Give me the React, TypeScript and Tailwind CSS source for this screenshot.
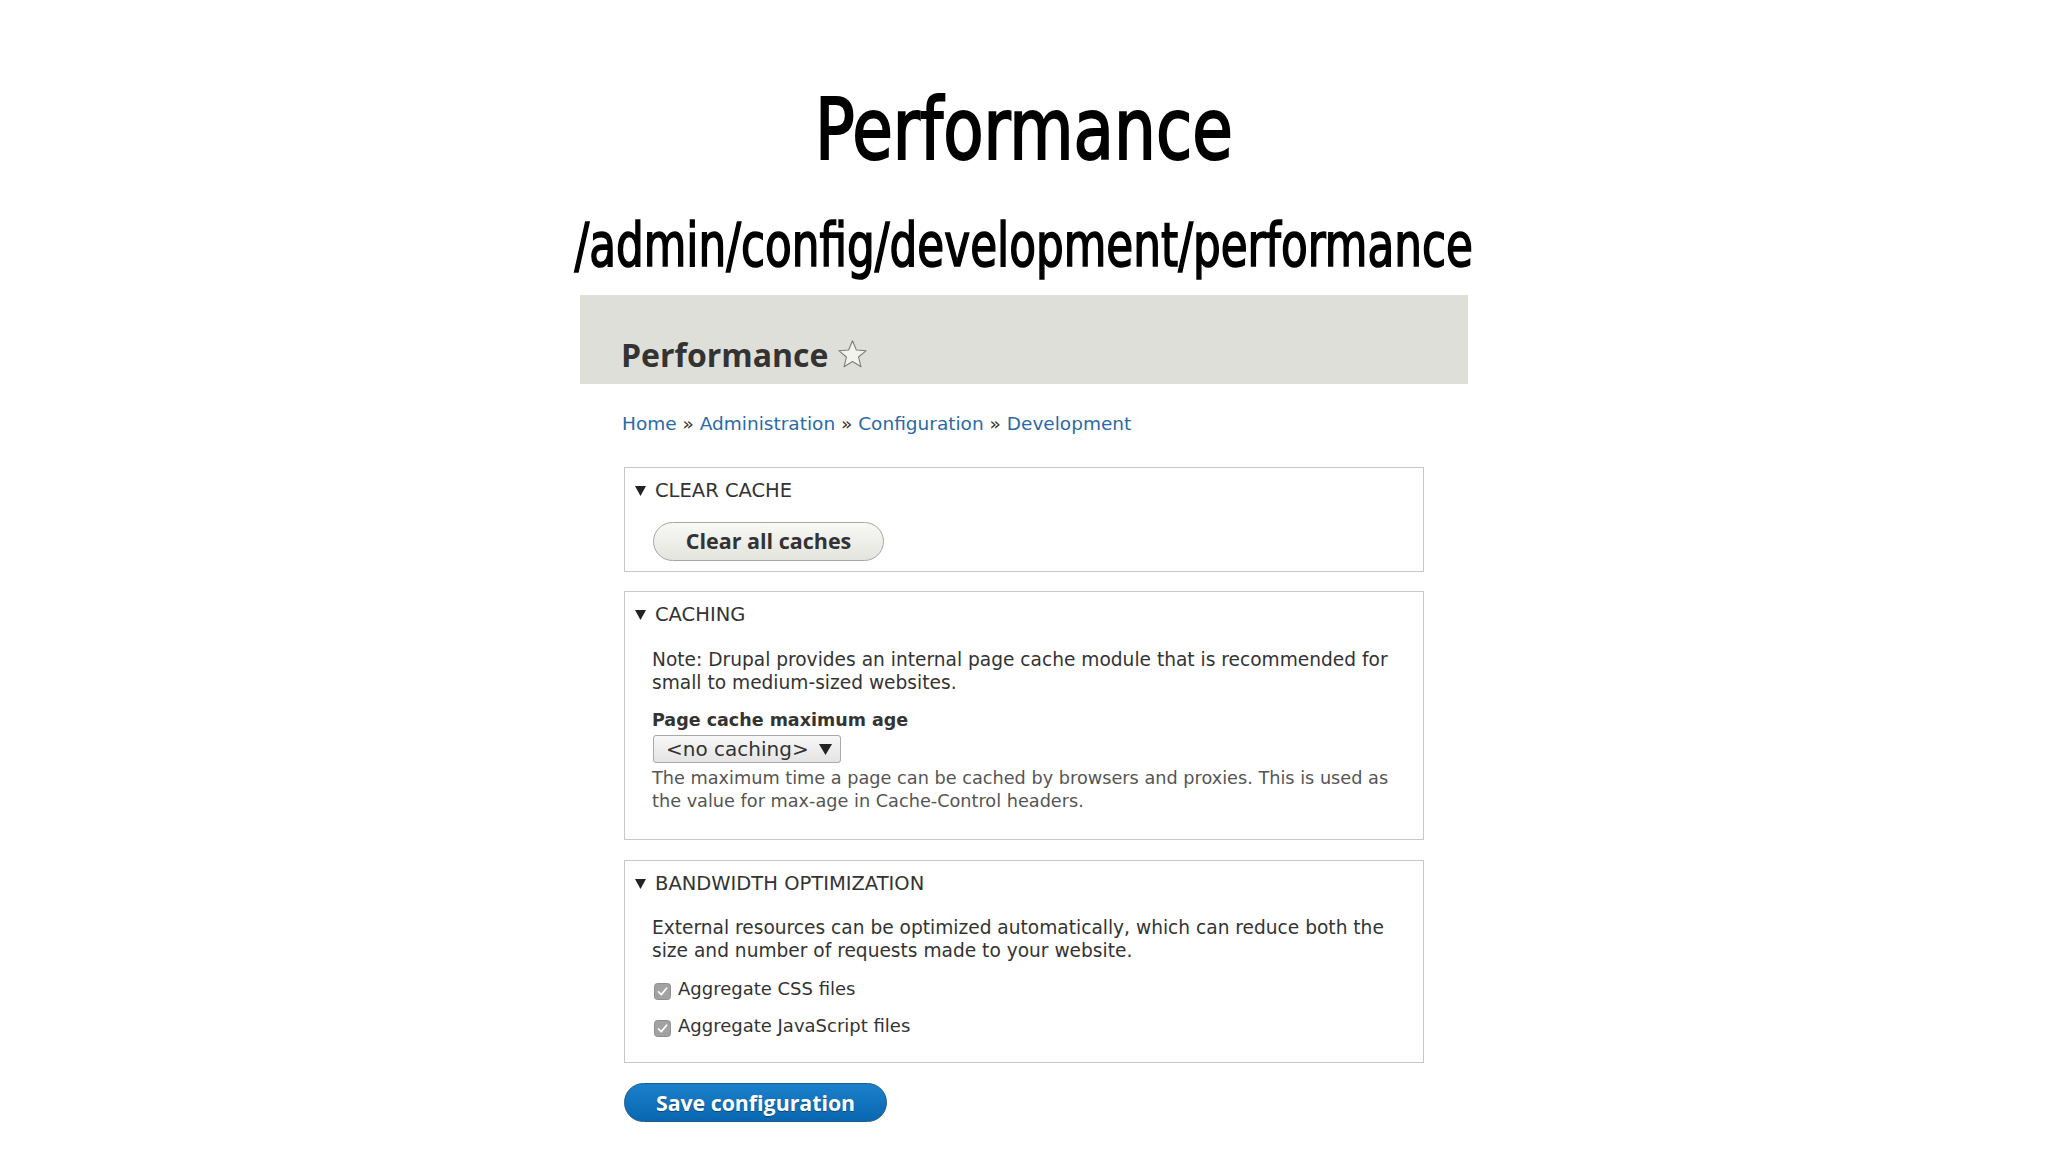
import { Fragment } from "react";

const narrow = "font-['Liberation_Sans_Narrow','DejaVu_Sans_Condensed',sans-serif]";
const dejavu = "font-['DejaVu_Sans','Liberation_Sans',sans-serif]";
const open = "font-['Open_Sans','DejaVu_Sans',sans-serif]";

function Triangle({ w = 11, h = 10 }: { w?: number; h?: number }) {
  return (
    <svg width={w} height={h} viewBox={`0 0 ${w} ${h}`} className="shrink-0">
      <path d={`M0 0 L${w} 0 L${w / 2} ${h} Z`} fill="#222" />
    </svg>
  );
}

function Legend({ label }: { label: string }) {
  return (
    <div className="flex items-center gap-[9px] pl-[10px] leading-[24px]">
      <Triangle />
      <span className={`${dejavu} text-[19.5px] uppercase text-[#333]`}>{label}</span>
    </div>
  );
}

function Checkbox({ label }: { label: string }) {
  return (
    <div className="flex items-start leading-[24px]">
      <svg width="17" height="17" viewBox="0 0 17 17" className="mt-[6px] ml-[2px] shrink-0">
        <rect x="0.5" y="0.5" width="16" height="16" rx="3" fill="#a2a2a2" stroke="#8f8f8f" />
        <path d="M4.5 8.8 L7.3 11.6 L12.6 5.2" fill="none" stroke="#fff" strokeWidth="1.7" strokeLinecap="round" strokeLinejoin="round" />
      </svg>
      <span className={`${dejavu} ml-[7px] text-[18px] text-[#333]`}>{label}</span>
    </div>
  );
}

function Lines({ lines, className }: { lines: string[]; className: string }) {
  return (
    <div className={className}>
      {lines.map((l, i) => (
        <div key={i} className="whitespace-nowrap">
          {l}
        </div>
      ))}
    </div>
  );
}

export default function App() {
  const crumbs = ["Home", "Administration", "Configuration", "Development"];

  return (
    <div className="min-h-screen bg-white flex flex-col items-center">
      {/* Slide title */}
      <h1
        className={`${narrow} mt-[86px] scale-x-[0.853] text-[86px] leading-none text-black [-webkit-text-stroke:2px_black]`}
      >
        Performance
      </h1>
      <h2
        className={`${narrow} mt-[42px] scale-x-[0.797] whitespace-nowrap text-[61px] leading-none text-black [-webkit-text-stroke:1.6px_black]`}
      >
        /admin/config/development/performance
      </h2>

      {/* Drupal screenshot */}
      <div className="mt-[20px] w-[888px] bg-white">
        <div className="h-[89px] bg-[#dfdfd9] pl-[41px] pt-[44px]">
          <div className="flex items-center gap-[9px]">
            <span className={`${open} text-[32px] font-bold leading-none text-[#333]`}>Performance</span>
            <svg width="31" height="31" viewBox="0 0 26 26" className="-mt-[2px]">
              <path
                d="M13 1.5 L16.2 9.2 L24.5 9.8 L18.1 15.1 L20.1 23.3 L13 18.9 L5.9 23.3 L7.9 15.1 L1.5 9.8 L9.8 9.2 Z"
                fill="#f2f2ee"
                stroke="#7d7d79"
                strokeWidth="0.9"
                strokeLinejoin="round"
              />
            </svg>
          </div>
        </div>

        <div className="px-[44px] pb-[30px]">
          <div className={`${dejavu} mt-[28px] -ml-[2px] text-[18.5px] leading-[24px] text-[#333]`}>
            {crumbs.map((c, i) => (
              <Fragment key={c}>
                {i > 0 && <span> » </span>}
                <a className="text-[#2a6aa6]">{c}</a>
              </Fragment>
            ))}
          </div>

          {/* Clear cache */}
          <div className="mt-[31px] w-[800px] border border-[#c8c8c8] pt-[11px] pb-[10px]">
            <Legend label="Clear cache" />
            <div className="pl-[28px] mt-[19px]">
              <button
                className={`${open} h-[39px] w-[231px] rounded-full border border-[#a6a6a6] bg-linear-to-b from-[#f8f8f5] to-[#e4e4df] text-[21.5px] font-bold text-[#333]`}
              >
                Clear all caches
              </button>
            </div>
          </div>

          {/* Caching */}
          <div className="mt-[19px] w-[800px] border border-[#c8c8c8] pt-[11px] pb-[26px]">
            <Legend label="Caching" />
            <div className="pl-[27px]">
              <Lines
                className={`${dejavu} mt-[21px] text-[18.6px] leading-[23px] text-[#333]`}
                lines={[
                  "Note: Drupal provides an internal page cache module that is recommended for",
                  "small to medium-sized websites.",
                ]}
              />
              <div className={`${dejavu} mt-[14px] text-[17.5px] font-bold leading-[24px] text-[#333]`}>
                Page cache maximum age
              </div>
              <div
                className={`${dejavu} ml-px mt-[3px] flex h-[28px] w-[188px] items-center justify-between rounded-[3px] border border-[#a9a9a9] bg-linear-to-b from-[#f7f7f7] to-[#e4e4e4] pl-[12px] pr-[8px] text-[20px] text-[#333]`}
              >
                <span>&lt;no caching&gt;</span>
                <Triangle w={13} h={11} />
              </div>
              <Lines
                className={`${dejavu} mt-[4px] text-[17.7px] leading-[23px] text-[#555]`}
                lines={[
                  "The maximum time a page can be cached by browsers and proxies. This is used as",
                  "the value for max-age in Cache-Control headers.",
                ]}
              />
            </div>
          </div>

          {/* Bandwidth optimization */}
          <div className="mt-[20px] w-[800px] border border-[#c8c8c8] pt-[11px] pb-[24px]">
            <Legend label="Bandwidth optimization" />
            <div className="pl-[27px]">
              <Lines
                className={`${dejavu} mt-[20px] text-[18.6px] leading-[23px] text-[#333]`}
                lines={[
                  "External resources can be optimized automatically, which can reduce both the",
                  "size and number of requests made to your website.",
                ]}
              />
              <div className="mt-[15px] flex flex-col gap-[13px]">
                <Checkbox label="Aggregate CSS files" />
                <Checkbox label="Aggregate JavaScript files" />
              </div>
            </div>
          </div>

          <button
            className={`${open} mt-[20px] h-[39px] w-[263px] rounded-full border border-[#1e5a8c] bg-linear-to-b from-[#1b80cc] to-[#0867b0] text-[21.3px] font-bold text-white [text-shadow:0_1px_1px_rgba(0,0,0,0.35)]`}
          >
            Save configuration
          </button>
        </div>
      </div>
    </div>
  );
}
